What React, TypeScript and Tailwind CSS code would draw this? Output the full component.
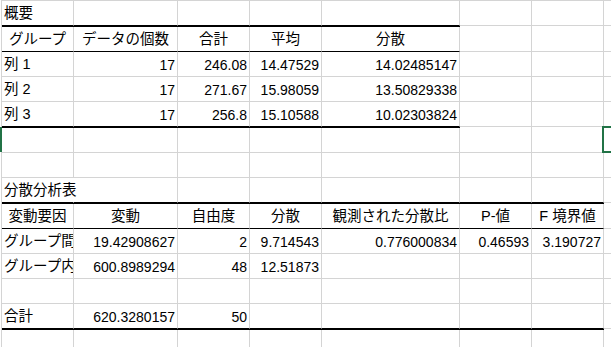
import React from 'react';

type Line = 'thin' | 'thick';
type Row = { h: string; cells: string[]; line?: Line; span?: number; head?: boolean; spill?: boolean };

// column widths include the 1px gridline on the right
const COL_W = ['w-[72px]', 'w-[104px]', 'w-[72px]', 'w-[72px]', 'w-[138px]', 'w-[72px]', 'w-[72px]', 'w-[40px]'];

const rows: Row[] = [
  { h: 'h-[25px]', cells: ['概要'], line: 'thick', span: 5 },
  { h: 'h-[26px]', cells: ['グループ', 'データの個数', '合計', '平均', '分散'], line: 'thin', span: 5, head: true },
  { h: 'h-[25px]', cells: ['列 1', '17', '246.08', '14.47529', '14.02485147'] },
  { h: 'h-[25px]', cells: ['列 2', '17', '271.67', '15.98059', '13.50829338'] },
  { h: 'h-[25px]', cells: ['列 3', '17', '256.8', '15.10588', '10.02303824'], line: 'thick', span: 5 },
  { h: 'h-[26px]', cells: [] },
  { h: 'h-[25px]', cells: [] },
  // title spills over the empty cell to its right, so the gridline is hidden there
  { h: 'h-[25px]', cells: ['分散分析表'], line: 'thick', span: 7, spill: true },
  {
    h: 'h-[26px]',
    cells: ['変動要因', '変動', '自由度', '分散', '観測された分散比', 'P-値', 'F 境界値'],
    line: 'thin',
    span: 7,
    head: true,
  },
  { h: 'h-[25px]', cells: ['グループ間', '19.42908627', '2', '9.714543', '0.776000834', '0.46593', '3.190727'] },
  { h: 'h-[25px]', cells: ['グループ内', '600.8989294', '48', '12.51873'] },
  { h: 'h-[25px]', cells: [] },
  { h: 'h-[25px]', cells: ['合計', '620.3280157', '50'], line: 'thick', span: 7 },
  { h: 'h-[30px]', cells: [] },
];

const isNum = (s: string) => /^[\d.]+$/.test(s);

function SheetRow({ row }: { row: Row }) {
  return (
    <div className="flex">
      {COL_W.map((w, i) => {
        const text = row.cells[i] ?? '';
        const marked = row.line && i < (row.span ?? 0);
        const bottom = marked ? 'border-b-black' : 'border-b-[#d4d4d4]';
        const thick = marked && row.line === 'thick' ? 'relative shadow-[0_1px_0_#000]' : '';
        const spill = row.spill && i === 0;
        const right = spill ? 'border-r-white overflow-visible' : 'border-r-[#d4d4d4] overflow-hidden';
        const num = isNum(text);
        const align = row.head ? 'justify-center' : num ? 'justify-end' : 'justify-start';
        const size = num ? 'text-[14px]' : 'text-[14.5px]';
        return (
          <div
            key={i}
            className={`${w} ${row.h} ${bottom} ${right} ${thick} ${align} ${size} shrink-0 flex items-center whitespace-nowrap border-r border-b px-[2px] pt-[2px] text-black`}
          >
            {text}
          </div>
        );
      })}
    </div>
  );
}

export default function App() {
  return (
    <div className="relative w-[611px] h-[347px] overflow-hidden bg-white font-['Liberation_Sans','Noto_Sans_CJK_JP',sans-serif]">
      <div className="ml-px border-l border-t border-[#d4d4d4]">
        {rows.map((r, i) => (
          <SheetRow key={i} row={r} />
        ))}
      </div>
      {/* active cell + row header marker */}
      <div className="absolute left-0 top-[127px] w-[2px] h-[25px] bg-[#217346]" />
      <div className="absolute left-[602px] top-[126px] w-[20px] h-[27px] border-2 border-[#217346]" />
    </div>
  );
}
